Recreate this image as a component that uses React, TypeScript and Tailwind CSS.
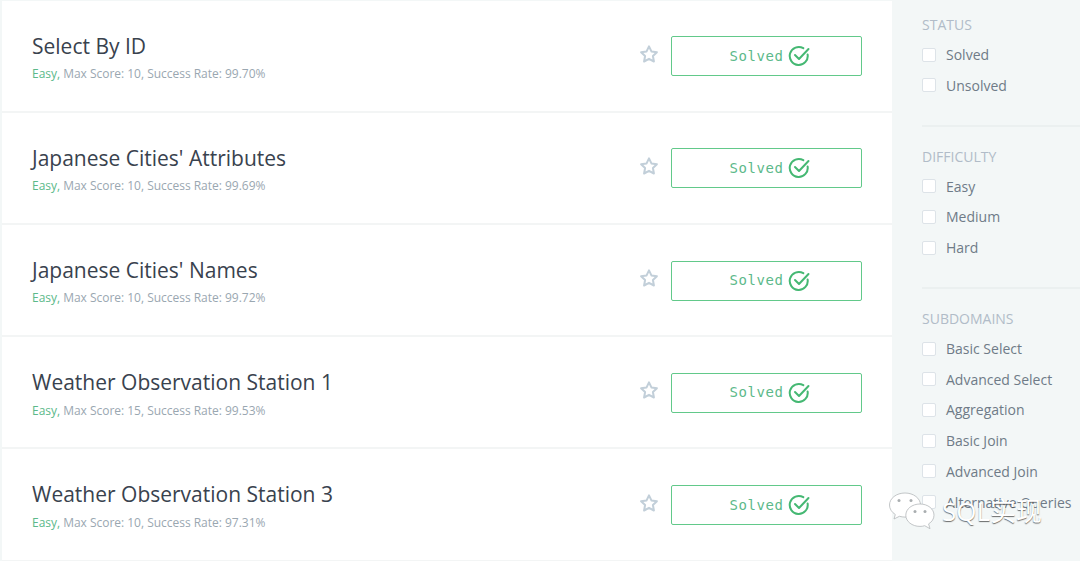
const challenges = [
  { name: 'Select By ID', score: 10, rate: '99.70%' },
  { name: "Japanese Cities' Attributes", score: 10, rate: '99.69%' },
  { name: "Japanese Cities' Names", score: 10, rate: '99.72%' },
  { name: 'Weather Observation Station 1', score: 15, rate: '99.53%' },
  { name: 'Weather Observation Station 3', score: 10, rate: '97.31%' },
];

const filters = [
  { title: 'Status', options: ['Solved', 'Unsolved'] },
  { title: 'Difficulty', options: ['Easy', 'Medium', 'Hard'] },
  {
    title: 'Subdomains',
    options: ['Basic Select', 'Advanced Select', 'Aggregation', 'Basic Join', 'Advanced Join', 'Alternative Queries'],
  },
];

function StarIcon() {
  return (
    <svg width="20" height="20" viewBox="0 0 24 24" fill="none" stroke="#c2cfd9" strokeWidth="2.4" strokeLinejoin="round">
      <path d="M12 2.800l2.900 6.100 6.600.9-4.800 4.600 1.200 6.600-5.900-3.200-5.900 3.200 1.200-6.600-4.800-4.600 6.600-.9z" />
    </svg>
  );
}

function CheckIcon() {
  return (
    <svg width="22" height="22" viewBox="0 0 22 22" fill="none" stroke="#45b873" strokeWidth="2" strokeLinecap="round" strokeLinejoin="round">
      <path d="M19.600 9.400a9 9 0 1 1-4.300-6.200" />
      <path d="M7 10l4 4 9.500-10" />
    </svg>
  );
}

function Watermark() {
  return (
    <div className="absolute left-[888px] top-[491px] flex items-center gap-[6px]">
      <svg width="48" height="40" viewBox="0 0 48 40" fill="#fff" stroke="#b4b8ba" strokeWidth="0.8">
        <path d="M17 2C8.500 2 1.500 7.300 1.500 14c0 3.900 2.300 7.300 5.800 9.500L6 28l5.400-2.700c1.800.5 3.700.8 5.600.8 8.500 0 15.500-5.400 15.500-12.100S25.500 2 17 2z" />
        <path d="M32 13c-8 0-14.200 5-14.200 11.200S24 35.400 32 35.400c1.600 0 3.200-.2 4.700-.7l5.300 3-1.400-4.800c3.300-2 5.400-5 5.400-8.700C46 18 40 13 32 13z" />
        <circle cx="11" cy="9.500" r="1.500" fill="#a9aeb0" stroke="none" />
        <circle cx="23" cy="9.500" r="1.500" fill="#a9aeb0" stroke="none" />
        <circle cx="27" cy="20.500" r="1.500" fill="#a9aeb0" stroke="none" />
        <circle cx="37" cy="20.500" r="1.500" fill="#a9aeb0" stroke="none" />
      </svg>
      <span className="text-[26px] leading-none text-white [text-shadow:0_1px_1px_rgba(60,60,60,0.75)] font-['Open_Sans','Noto_Sans_CJK_SC',sans-serif]">
        SQL实现
      </span>
    </div>
  );
}

export default function App() {
  return (
    <div className="relative flex h-[561px] w-[1080px] overflow-hidden bg-[#f3f7f7] font-['Open_Sans',sans-serif]">
      <main className="ml-[2px] w-[890px] shrink-0 pt-[0.7px]">
        {challenges.map((c) => (
          <div key={c.name} className="flex h-[112.2px] items-center border-b-2 border-[#f3f5f5] bg-white pl-[30px] pr-[30px] pt-[1px]">
            <div className="flex-1 pt-[2px]">
              <h4 className="text-[21px] leading-[27px] text-[#39424e]">{c.name}</h4>
              <p className="mt-[6.5px] text-[12px] leading-[16px] tracking-[-0.02px] text-[#9aa7b1]">
                <span className="text-[#5cb98a]">Easy,</span> Max Score: {c.score}, Success Rate: {c.rate}
              </p>
            </div>
            <div className="mb-[5px] mr-[12px]">
              <StarIcon />
            </div>
            <div className="flex h-[40px] w-[191px] items-center justify-center gap-[4px] rounded-[2px] border border-[#62c98a] bg-white pl-[6px]">
              <span className="text-[14px] tracking-[0.6px] text-[#5cb98a] font-['DejaVu_Sans_Mono',monospace]">Solved</span>
              <CheckIcon />
            </div>
          </div>
        ))}
      </main>
      <aside className="flex-1 pl-[30px] pt-[15px]">
        {filters.map((f, i) => (
          <div key={f.title} className={i > 0 ? 'mt-[20px] border-t-2 border-[#ebf0f0] pt-[20px]' : ''}>
            <h5 className="text-[14px] leading-[20px] uppercase text-[#b1bcc8]">{f.title}</h5>
            <div className="mt-[9.5px] flex flex-col gap-[10.7px] pb-[9.5px]">
              {f.options.map((o) => (
                <label key={o} className="flex h-[20px] items-center gap-[10px] text-[14px] text-[#6f7b87]">
                  <span className="h-[14px] w-[14px] rounded-[2px] border border-[#dde3e8] bg-white" />
                  {o}
                </label>
              ))}
            </div>
          </div>
        ))}
      </aside>
      <Watermark />
    </div>
  );
}
